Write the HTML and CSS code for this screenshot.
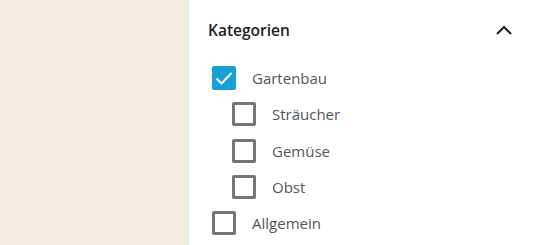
FILE: index.html
```html
<!DOCTYPE html>
<html lang="de">
<head>
    <meta charset="UTF-8">
    <title>Kategorien</title>
    <link rel="stylesheet" href="styles.css">
</head>
<body>
    <div class="canvas"></div>

    <!-- Sidebar panel -->
    <div class="panel">
        <div class="panel-header">
            <h2>Kategorien</h2>
            <svg class="chevron" width="16" height="10" viewBox="0 0 16 10">
                <polyline points="1,9 8,2 15,9" fill="none" stroke="#1e1e1e" stroke-width="2"/>
            </svg>
        </div>

        <ul class="terms">
            <li class="term">
                <span class="box checked">
                    <svg width="24" height="24" viewBox="0 0 24 24">
                        <polyline points="4.5,12.5 9.5,17.5 19.5,7" fill="none" stroke="#fff" stroke-width="2"/>
                    </svg>
                </span>
                <span class="label">Gartenbau</span>
            </li>
            <li class="term child">
                <span class="box"></span>
                <span class="label">Sträucher</span>
            </li>
            <li class="term child">
                <span class="box"></span>
                <span class="label">Gemüse</span>
            </li>
            <li class="term child">
                <span class="box"></span>
                <span class="label">Obst</span>
            </li>
            <li class="term">
                <span class="box"></span>
                <span class="label">Allgemein</span>
            </li>
        </ul>
    </div>
</body>
</html>
```

FILE: styles.css
```css
body {
    margin: 0;
    display: flex;
    height: 245px;
    overflow: hidden;
    font-family: "Open Sans", "Noto Sans", sans-serif;
    background-color: #fff;
}

.canvas {
    width: 188px;
    background-color: #f4eee0;
}

.panel {
    flex: 1;
    border-left: 1px solid #d9edf3;
    background-color: #fff;
}

.panel-header {
    display: flex;
    align-items: center;
    justify-content: space-between;
    height: 60px;
    padding: 0 25px 0 19px;
}

.panel-header h2 {
    margin: 0;
    font-size: 15.5px;
    font-weight: 600;
    color: #1e1e1e;
}

.terms {
    list-style: none;
    margin: 0;
    padding: 0 0 0 23px;
}

.term {
    display: flex;
    align-items: center;
    height: 36.25px;
    gap: 16px;
}

.term.child {
    padding-left: 20px;
}

.box {
    box-sizing: border-box;
    width: 24px;
    height: 24px;
    border: 3px solid #757575;
    border-radius: 2px;
}

.box.checked {
    border: none;
    background-color: #15a0d6;
}

.box svg {
    display: block;
}

.label {
    font-size: 15px;
    color: #50575e;
}
```
